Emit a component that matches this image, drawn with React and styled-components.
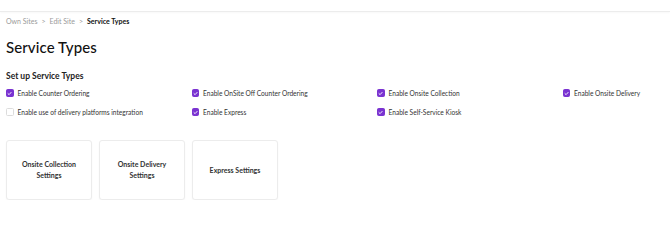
import styled, { createGlobalStyle } from 'styled-components';

const GlobalStyle = createGlobalStyle`
  * { box-sizing: border-box; }
  body {
    margin: 0;
    background: #fff;
    font-family: 'Lato', 'Noto Sans', sans-serif;
    color: #222;
  }
`;

const TopBar = styled.header`
  height: 12px;
  border-bottom: 1px solid #ececec;
  box-shadow: 0 1px 2px rgba(0, 0, 0, 0.03);
`;

const Page = styled.main`
  padding: 4px 6px 0;
`;

const Crumbs = styled.nav`
  display: flex;
  align-items: center;
  gap: 4px;
  font-size: 7px;
  color: #9a9a9a;
  height: 10px;

  b {
    color: #111;
    font-weight: 700;
  }
`;

const Title = styled.h1`
  margin: 12px 0 0;
  font-size: 15px;
  font-weight: 500;
  color: #111;
  letter-spacing: 0.1px;
`;

const Heading = styled.h2`
  margin: 15px 0 0;
  font-size: 8.5px;
  font-weight: 700;
  color: #222;
`;

const Options = styled.div`
  display: grid;
  grid-template-columns: repeat(3, 185.5px) 1fr;
  row-gap: 9px;
  margin-top: 7px;
`;

const Option = styled.label`
  display: flex;
  align-items: center;
  gap: 4px;
  height: 10px;
  font-size: 6.6px;
  color: #333;
`;

const Box = styled.span`
  width: 7.5px;
  height: 7.5px;
  border-radius: 1.5px;
  display: grid;
  place-items: center;
  background: ${(p) => (p.$on ? '#7a33d1' : '#fff')};
  border: 1px solid ${(p) => (p.$on ? '#7a33d1' : '#dcdcdc')};
`;

const Cards = styled.div`
  display: flex;
  gap: 7px;
  margin-top: 23px;
`;

const Card = styled.button`
  width: 86px;
  height: 60px;
  border: 1px solid #ececec;
  border-radius: 3px;
  background: #fff;
  display: grid;
  place-items: center;
  padding: 0 8px;
  font-family: inherit;
  font-size: 7px;
  font-weight: 700;
  line-height: 11px;
  color: #333;
  text-align: center;
  box-shadow: 0 1px 2px rgba(0, 0, 0, 0.03);
`;

const options = [
  ['Enable Counter Ordering', true],
  ['Enable OnSite Off Counter Ordering', true],
  ['Enable Onsite Collection', true],
  ['Enable Onsite Delivery', true],
  ['Enable use of delivery platforms integration', false],
  ['Enable Express', true],
  ['Enable Self-Service Kiosk', true],
];

const Check = () => (
  <svg width="5" height="5" viewBox="0 0 10 10">
    <path d="M2 5.2 4.2 7.3 8.2 2.8" fill="none" stroke="#fff" strokeWidth="1.8" strokeLinecap="round" strokeLinejoin="round" />
  </svg>
);

export default function App() {
  return (
    <>
      <GlobalStyle />
      <TopBar />
      <Page>
        <Crumbs>
          <span>Own Sites</span>
          <span>&gt;</span>
          <span>Edit Site</span>
          <span>&gt;</span>
          <b>Service Types</b>
        </Crumbs>
        <Title>Service Types</Title>
        <Heading>Set up Service Types</Heading>
        <Options>
          {options.map(([label, on]) => (
            <Option key={label}>
              <Box $on={on}>{on && <Check />}</Box>
              {label}
            </Option>
          ))}
        </Options>
        <Cards>
          <Card>Onsite Collection Settings</Card>
          <Card>Onsite Delivery Settings</Card>
          <Card>Express Settings</Card>
        </Cards>
      </Page>
    </>
  );
}
